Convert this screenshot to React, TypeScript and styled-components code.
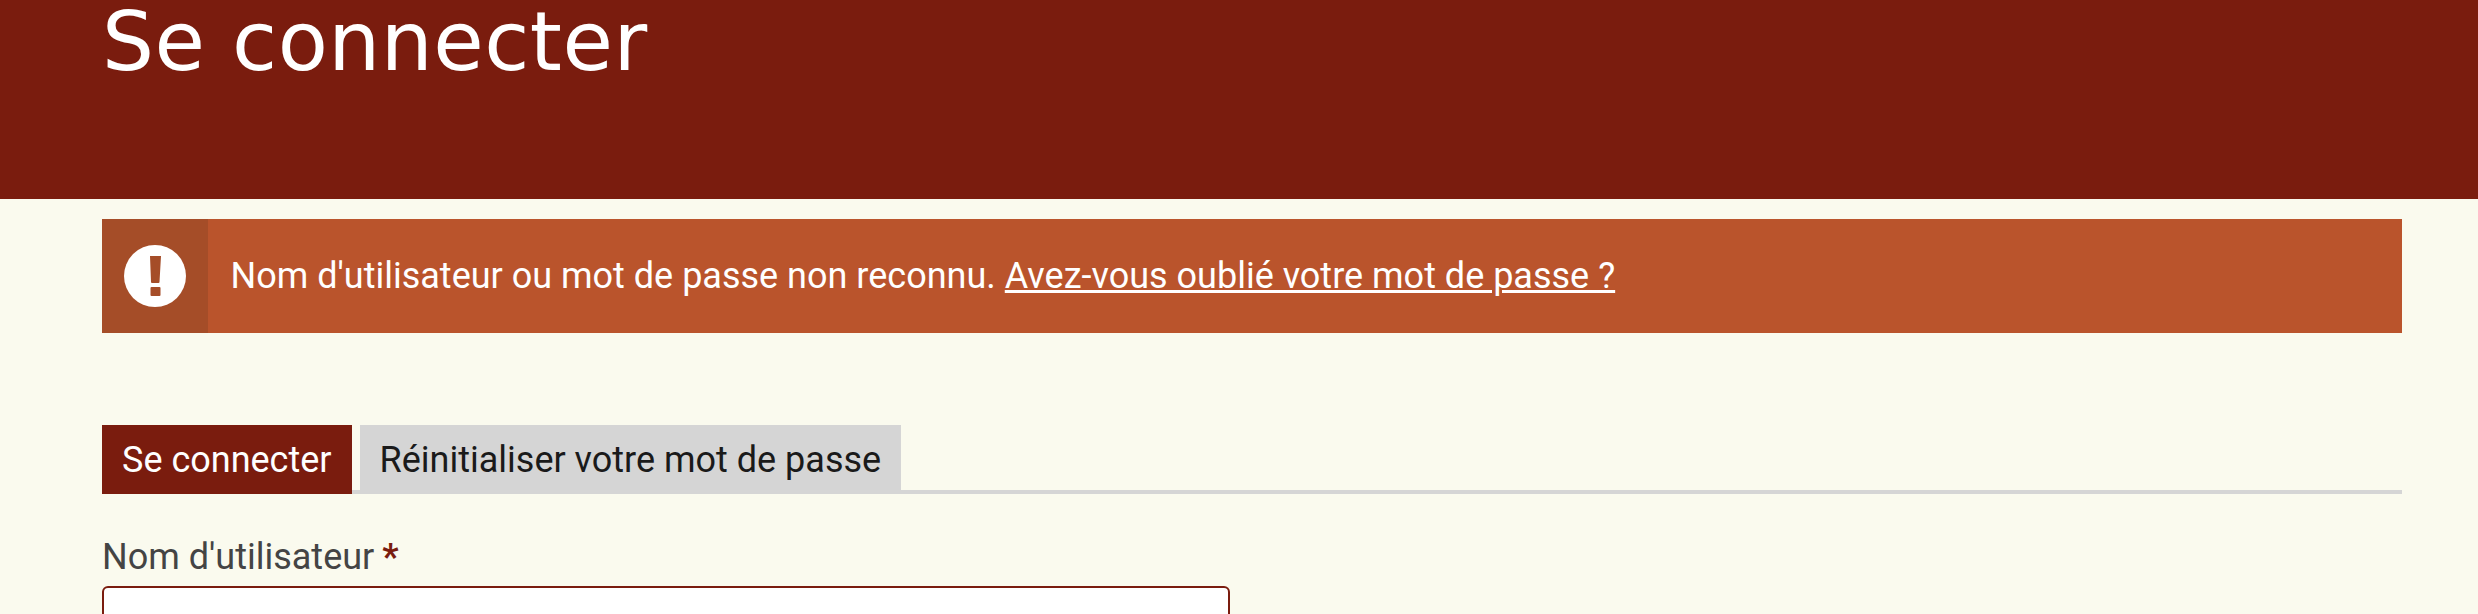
import { createGlobalStyle, styled } from "styled-components";

const GlobalStyle = createGlobalStyle`
  html, body {
    margin: 0;
    height: 614px;
    overflow: hidden;
    background: #fafaee;
    font-family: Roboto, "Liberation Sans", sans-serif;
  }
`;

const Hero = styled.header`
  height: 199px;
  box-sizing: border-box;
  padding: 0 102px;
  background: #7a1c0e;
`;

const Title = styled.h1`
  margin: 0;
  color: #fff;
  font-family: "DejaVu Sans", sans-serif;
  font-size: 82px;
  font-weight: 400;
  line-height: 83px;
  letter-spacing: 0.5px;
`;

const Main = styled.main`
  padding: 20px 76px 0 102px;
`;

const Alert = styled.div`
  display: flex;
  height: 114px;
  background: #ba542c;
  color: #fff;
  font-size: 36px;
`;

const AlertIcon = styled.div`
  display: flex;
  align-items: center;
  justify-content: center;
  width: 106px;
  background: #a54d28;
`;

const AlertText = styled.div`
  display: flex;
  align-items: center;
  gap: 0.25em;
  padding-left: 22.5px;

  a {
    color: inherit;
  }
`;

const Tabs = styled.nav`
  display: flex;
  gap: 8px;
  height: 69px;
  margin-top: 92px;
  border-bottom: 4px solid #d5d5d5;
  box-sizing: border-box;
`;

const Tab = styled.a<{ $active?: boolean }>`
  display: flex;
  align-items: center;
  height: 69px;
  box-sizing: border-box;
  padding: 0 20px;
  background: ${(p) => (p.$active ? "#7a1c0e" : "#d5d5d5")};
  color: ${(p) => (p.$active ? "#fff" : "#1a1a1a")};
  font-size: 36px;
`;

const Field = styled.div`
  margin-top: 37px;
`;

const Label = styled.label`
  display: block;
  color: #444;
  font-size: 36px;
  line-height: 52px;
`;

const Required = styled.span`
  margin-left: 8px;
  color: #7a1c0e;
  font-weight: 700;
`;

const Input = styled.input`
  display: block;
  width: 1128px;
  height: 90px;
  box-sizing: border-box;
  margin-top: 3px;
  border: 2px solid #7a1c0e;
  border-radius: 6px;
  background: #fff;
`;

export default function App() {
  return (
    <>
      <GlobalStyle />
      <Hero>
        <Title>Se connecter</Title>
      </Hero>
      <Main>
        <Alert>
          <AlertIcon>
            <svg width="62" height="62" viewBox="0 0 62 62">
              <circle cx="31" cy="31" r="31" fill="#fff" />
              <path
                d="M26 11h11l-1.500 26a1 1 0 0 1-1 1h-6.500a1 1 0 0 1-1-1z"
                fill="#a54d28"
              />
              <rect x="26.500" y="42" width="10" height="9" rx="1" fill="#a54d28" />
            </svg>
          </AlertIcon>
          <AlertText>
            <span>Nom d'utilisateur ou mot de passe non reconnu.</span>
            <a href="#">Avez-vous oublié votre mot de passe ?</a>
          </AlertText>
        </Alert>
        <Tabs>
          <Tab $active>Se connecter</Tab>
          <Tab>Réinitialiser votre mot de passe</Tab>
        </Tabs>
        <Field>
          <Label>
            Nom d'utilisateur<Required>*</Required>
          </Label>
          <Input type="text" />
        </Field>
      </Main>
    </>
  );
}
